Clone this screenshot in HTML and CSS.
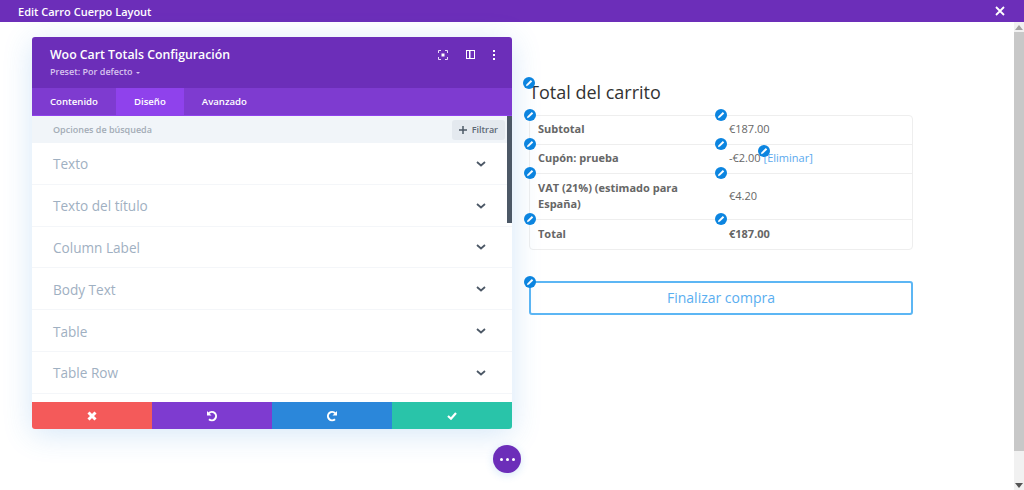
FILE: index.html
```html
<!DOCTYPE html>
<html>
<head>
    <title>Edit Carro Cuerpo Layout</title>
    <link rel="stylesheet" href="styles.css">
</head>
<body>
    <div class="topbar">
        <span class="topbar-title">Edit Carro Cuerpo Layout</span>
        <svg class="topbar-close" width="10" height="10" viewBox="0 0 10 10"><path d="M1 1l8 8M9 1l-8 8" stroke="#fff" stroke-width="1.800" fill="none"/></svg>
    </div>

    <div class="workspace">
        <div class="canvas">
            <div class="cart">
                <h2 class="cart-title"><span class="pen pen-title"><svg viewBox="0 0 12 12"><path d="M3 9.200l.6-2L7.800 3l1.400 1.400-4.200 4.200z" fill="#fff"/></svg></span>Total del carrito</h2>

                <div class="cart-table">
                    <div class="cart-row">
                        <div class="cell cell-label"><span class="pen"><svg viewBox="0 0 12 12"><path d="M3 9.200l.6-2L7.800 3l1.400 1.400-4.200 4.200z" fill="#fff"/></svg></span>Subtotal</div>
                        <div class="cell"><span class="pen"><svg viewBox="0 0 12 12"><path d="M3 9.200l.6-2L7.800 3l1.400 1.400-4.200 4.200z" fill="#fff"/></svg></span>€187.00</div>
                    </div>
                    <div class="cart-row">
                        <div class="cell cell-label"><span class="pen"><svg viewBox="0 0 12 12"><path d="M3 9.200l.6-2L7.800 3l1.400 1.400-4.200 4.200z" fill="#fff"/></svg></span>Cupón: prueba</div>
                        <div class="cell"><span class="pen"><svg viewBox="0 0 12 12"><path d="M3 9.200l.6-2L7.800 3l1.400 1.400-4.200 4.200z" fill="#fff"/></svg></span>-€2.00<span class="remove"><span class="pen pen-remove"><svg viewBox="0 0 12 12"><path d="M3 9.200l.6-2L7.800 3l1.400 1.400-4.200 4.200z" fill="#fff"/></svg></span>[Eliminar]</span></div>
                    </div>
                    <div class="cart-row cart-row-tall">
                        <div class="cell cell-label"><span class="pen"><svg viewBox="0 0 12 12"><path d="M3 9.200l.6-2L7.800 3l1.400 1.400-4.200 4.200z" fill="#fff"/></svg></span><span class="cell-wrap">VAT (21%) (estimado para España)</span></div>
                        <div class="cell"><span class="pen"><svg viewBox="0 0 12 12"><path d="M3 9.200l.6-2L7.800 3l1.400 1.400-4.200 4.200z" fill="#fff"/></svg></span>€4.20</div>
                    </div>
                    <div class="cart-row">
                        <div class="cell cell-label"><span class="pen"><svg viewBox="0 0 12 12"><path d="M3 9.200l.6-2L7.800 3l1.400 1.400-4.200 4.200z" fill="#fff"/></svg></span>Total</div>
                        <div class="cell cell-total"><span class="pen"><svg viewBox="0 0 12 12"><path d="M3 9.200l.6-2L7.800 3l1.400 1.400-4.200 4.200z" fill="#fff"/></svg></span>€187.00</div>
                    </div>
                </div>

                <div class="checkout"><span class="pen pen-checkout"><svg viewBox="0 0 12 12"><path d="M3 9.200l.6-2L7.800 3l1.400 1.400-4.200 4.200z" fill="#fff"/></svg></span>Finalizar compra</div>
            </div>
        </div>

        <div class="scrollbar">
            <div class="scroll-btn"><svg width="8" height="5" viewBox="0 0 8 5"><path d="M0 5l4-5 4 5z" fill="#a3a3a3"/></svg></div>
            <div class="scroll-thumb"></div>
            <div class="scroll-btn"><svg width="8" height="5" viewBox="0 0 8 5"><path d="M0 0l4 5 4-5z" fill="#555"/></svg></div>
        </div>

        <div class="panel">
            <div class="panel-head">
                <div>
                    <div class="panel-title">Woo Cart Totals Configuración</div>
                    <div class="panel-preset">Preset: Por defecto <span class="caret"></span></div>
                </div>
                <div class="panel-tools">
                    <svg width="10" height="10" viewBox="0 0 10 10"><path d="M.5 3V.5H3M7 .5h2.500V3M9.500 7v2.500H7M3 9.500H.5V7" stroke="#eadcf8" fill="none"/><rect x="3.500" y="3.500" width="3" height="3" fill="#fff"/></svg>
                    <svg width="9" height="9" viewBox="0 0 9 9"><path d="M0 0h9v9H0zM1 1v7h2V1zM4.500 1v7H8V1z" fill="#fff" fill-rule="evenodd"/></svg>
                    <svg width="2" height="10" viewBox="0 0 2 10"><path d="M0 0h2v2H0zM0 4h2v2H0zM0 8h2v2H0z" fill="#fff"/></svg>
                </div>
            </div>
            <div class="tabs">
                <div class="tab">Contenido</div>
                <div class="tab tab-active">Diseño</div>
                <div class="tab">Avanzado</div>
            </div>
            <div class="search">
                <span class="search-text">Opciones de búsqueda</span>
                <span class="filter"><svg width="8" height="8" viewBox="0 0 8 8"><path d="M4 0v8M0 4h8" stroke="#4c5866" stroke-width="1.500"/></svg>Filtrar</span>
            </div>
            <div class="groups">
                <div class="group"><span>Texto</span><svg class="chev" width="10" height="6" viewBox="0 0 10 6"><path d="M1 1l4 3.500L9 1" stroke="#4c5866" stroke-width="1.800" fill="none"/></svg></div>
                <div class="group"><span>Texto del título</span><svg class="chev" width="10" height="6" viewBox="0 0 10 6"><path d="M1 1l4 3.500L9 1" stroke="#4c5866" stroke-width="1.800" fill="none"/></svg></div>
                <div class="group"><span>Column Label</span><svg class="chev" width="10" height="6" viewBox="0 0 10 6"><path d="M1 1l4 3.500L9 1" stroke="#4c5866" stroke-width="1.800" fill="none"/></svg></div>
                <div class="group"><span>Body Text</span><svg class="chev" width="10" height="6" viewBox="0 0 10 6"><path d="M1 1l4 3.500L9 1" stroke="#4c5866" stroke-width="1.800" fill="none"/></svg></div>
                <div class="group"><span>Table</span><svg class="chev" width="10" height="6" viewBox="0 0 10 6"><path d="M1 1l4 3.500L9 1" stroke="#4c5866" stroke-width="1.800" fill="none"/></svg></div>
                <div class="group"><span>Table Row</span><svg class="chev" width="10" height="6" viewBox="0 0 10 6"><path d="M1 1l4 3.500L9 1" stroke="#4c5866" stroke-width="1.800" fill="none"/></svg></div>
                <div class="panel-scroll"></div>
            </div>
            <div class="actions">
                <div class="action action-cancel"><svg width="10" height="10" viewBox="0 0 10 10"><path d="M1.500 1.500l7 7M8.500 1.500l-7 7" stroke="#fff" stroke-width="3" fill="none"/></svg></div>
                <div class="action action-undo"><svg width="12" height="12" viewBox="0 0 12 12"><path d="M2.800 3.200A4.200 4.200 0 1 1 3 9.200" stroke="#fff" stroke-width="2" fill="none"/><path d="M1 1v4.500h4.500z" fill="#fff"/></svg></div>
                <div class="action action-redo"><svg width="12" height="12" viewBox="0 0 12 12"><path d="M9.200 3.200A4.200 4.200 0 1 0 9 9.200" stroke="#fff" stroke-width="2" fill="none"/><path d="M11 1v4.500H6.500z" fill="#fff"/></svg></div>
                <div class="action action-save"><svg width="10" height="8" viewBox="0 0 10 8"><path d="M1 4l3 2.700L9 1" stroke="#fff" stroke-width="2.200" fill="none"/></svg></div>
            </div>
        </div>

        <div class="fab"><i></i><i></i><i></i></div>
    </div>
</body>
</html>
```

FILE: styles.css
```css
html, body {
    margin: 0;
    height: 490px;
    overflow: hidden;
    background: #fff;
    font-family: "Open Sans", sans-serif;
    color: #666;
}

.topbar {
    display: flex;
    justify-content: space-between;
    align-items: center;
    height: 22px;
    padding: 0 18px;
    background: #6c2eb9;
    color: #fff;
    font-size: 11px;
    font-weight: 600;
}

.topbar-close {
    margin-right: 1px;
}

.workspace {
    position: relative;
    display: flex;
    height: 468px;
}

.canvas {
    flex: 1;
    padding: 58px 0 0 529px;
}

.cart {
    width: 384px;
}

.cart-title {
    position: relative;
    margin: 0 0 11px;
    font-size: 18px;
    font-weight: 400;
    line-height: 24px;
    color: #333;
}

.cart-table {
    border: 1px solid #eee;
    border-radius: 4px;
    background: #fff;
}

.cart-row {
    display: flex;
    box-sizing: border-box;
    height: 29px;
    border-bottom: 1px solid #eee;
    font-size: 11px;
    line-height: 16.500px;
}

.cart-row-tall {
    height: 46px;
}

.cart-row:last-child {
    border-bottom: 0;
}

.cell {
    position: relative;
    box-sizing: border-box;
    display: flex;
    align-items: center;
    gap: 3px;
    width: 191px;
    padding: 0 8px 1px;
}

.cell-wrap {
    display: block;
    width: 150px;
}

.cell-label, .cell-total {
    font-weight: 700;
}

.remove {
    position: relative;
    color: #5aa9ee;
}

.pen {
    position: absolute;
    left: -6px;
    top: -7px;
    width: 12px;
    height: 12px;
    border-radius: 50%;
    background: #0c85e0;
}

.pen svg {
    display: block;
}

.pen-title {
    top: -3px;
}

.pen-remove {
    top: -5px;
}

.pen-checkout {
    left: -7px;
    top: -7px;
}

.checkout {
    position: relative;
    box-sizing: border-box;
    height: 34px;
    margin-top: 31px;
    border: 2px solid #5cb6f4;
    border-radius: 3px;
    text-align: center;
    font-size: 14px;
    line-height: 30px;
    color: #5aaef0;
}

.scrollbar {
    display: flex;
    flex-direction: column;
    width: 10px;
    background: #f1f1f1;
}

.scroll-btn {
    display: flex;
    align-items: center;
    justify-content: center;
    height: 10px;
}

.scroll-thumb {
    height: 419px;
    margin-bottom: auto;
    background: #c8c8c8;
}

.panel {
    position: absolute;
    left: 32px;
    top: 15px;
    width: 480px;
    height: 392px;
    display: flex;
    flex-direction: column;
    border-radius: 3px;
    overflow: hidden;
    background: #fff;
    box-shadow: 0 5px 30px rgba(43, 135, 218, 0.2);
}

.panel-head {
    display: flex;
    justify-content: space-between;
    height: 51px;
    box-sizing: border-box;
    padding: 10px 17px 0 18px;
    background: #6c2eb9;
    color: #fff;
}

.panel-title {
    font-size: 12.300px;
    font-weight: 600;
    line-height: 16px;
}

.panel-preset {
    margin-top: 3px;
    font-size: 9px;
    font-weight: 600;
    line-height: 12px;
    color: #d8c4ef;
}

.caret {
    display: inline-block;
    margin-left: 1px;
    vertical-align: 1px;
    border: 2.500px solid transparent;
    border-top-color: #d8c4ef;
    border-bottom: 0;
}

.panel-tools {
    display: flex;
    align-items: flex-start;
    gap: 18px;
    padding-top: 3px;
}

.tabs {
    display: flex;
    height: 27px;
    background: #7e3bd0;
    color: #fff;
    font-size: 9.600px;
    font-weight: 600;
    line-height: 27px;
    border-bottom: 1px solid #8f42ec;
}

.tab {
    padding: 0 18px;
}

.tab-active {
    background: #8f42ec;
}

.search {
    display: flex;
    justify-content: space-between;
    align-items: center;
    height: 27px;
    padding: 0 7px 0 21px;
    background: #f1f5f9;
    font-size: 9px;
    font-weight: 600;
    color: #a3acb6;
}

.filter {
    display: flex;
    align-items: center;
    gap: 5px;
    height: 20px;
    padding: 0 7px;
    border-radius: 3px;
    background: #e4e9ef;
    color: #5c6875;
}

.groups {
    position: relative;
    flex: 1;
}

.group {
    display: flex;
    justify-content: space-between;
    align-items: center;
    height: 41.800px;
    padding: 1px 26px 0 21px;
    border-bottom: 1px solid #f4f6f9;
    box-sizing: border-box;
    font-size: 13.600px;
    color: #9fb0c2;
}

.panel-scroll {
    position: absolute;
    right: 0;
    top: -27px;
    width: 5px;
    height: 107px;
    background: #4c5866;
}

.actions {
    display: flex;
    height: 27px;
}

.action {
    flex: 1;
    display: flex;
    align-items: center;
    justify-content: center;
}

.action-cancel {
    background: #f45a5a;
}

.action-undo {
    background: #7e3bd0;
}

.action-redo {
    background: #2b87da;
}

.action-save {
    background: #29c4a9;
}

.fab {
    position: absolute;
    left: 493px;
    top: 423px;
    width: 28px;
    height: 28px;
    display: flex;
    align-items: center;
    justify-content: center;
    gap: 3px;
    border-radius: 50%;
    background: #6c2eb9;
    box-shadow: 0 2px 8px rgba(43, 135, 218, 0.2);
}

.fab i {
    width: 3px;
    height: 3px;
    border-radius: 50%;
    background: #fff;
}
```
